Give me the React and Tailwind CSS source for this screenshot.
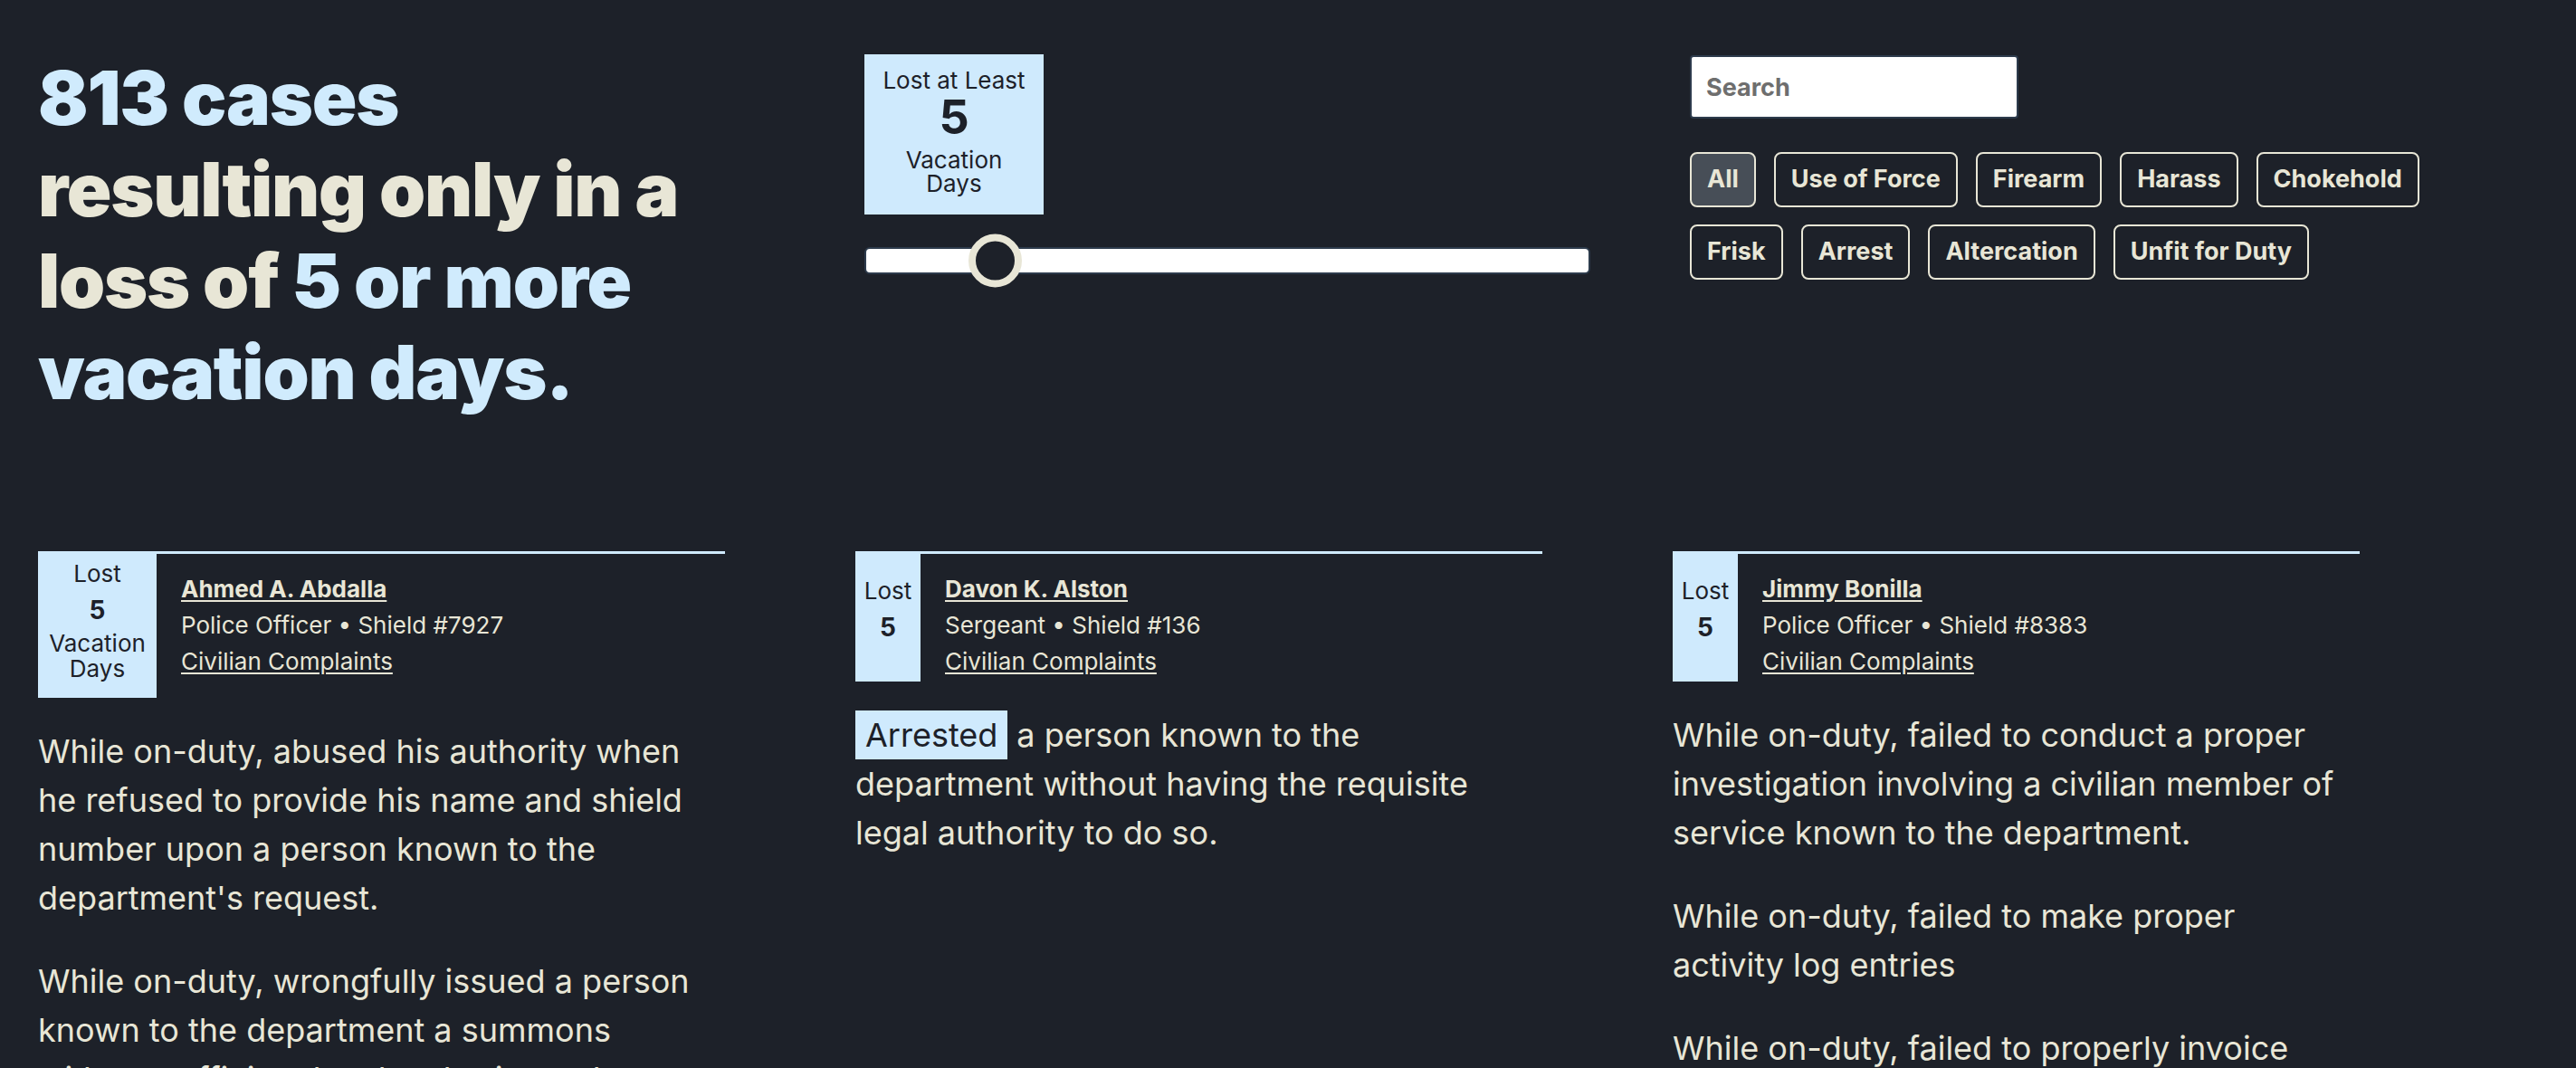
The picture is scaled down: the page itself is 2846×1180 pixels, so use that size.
import { useState } from 'react';

const filters = ['All', 'Use of Force', 'Firearm', 'Harass', 'Chokehold', 'Frisk', 'Arrest', 'Altercation', 'Unfit for Duty'];

const cases = [
    {
        name: 'Ahmed A. Abdalla',
        rank: 'Police Officer',
        shield: '7927',
        days: 5,
        showUnit: true,
        charges: [
            "While on-duty, abused his authority when he refused to provide his name and shield number upon a person known to the department's request.",
            'While on-duty, wrongfully issued a person known to the department a summons without sufficient legal authority to do so.'
        ]
    },
    {
        name: 'Davon K. Alston',
        rank: 'Sergeant',
        shield: '136',
        days: 5,
        showUnit: false,
        highlight: 'Arrested',
        charges: ['a person known to the department without having the requisite legal authority to do so.']
    },
    {
        name: 'Jimmy Bonilla',
        rank: 'Police Officer',
        shield: '8383',
        days: 5,
        showUnit: false,
        charges: [
            'While on-duty, failed to conduct a proper investigation involving a civilian member of service known to the department.',
            'While on-duty, failed to make proper activity log entries',
            'While on-duty, failed to properly invoice property.'
        ]
    }
];

function CaseCard({ c }) {
    return (
        <div>
            <div className="flex items-stretch">
                <div className={`${c.showUnit ? 'w-[131px]' : 'w-[72px]'} shrink-0 bg-[#cfeafd] text-[#1d2129] pt-[8px] pb-[18px] flex flex-col justify-center items-center text-center text-[26px]`}>
                    <div className="leading-[34px]">Lost</div>
                    <div className="leading-[46px] text-[28px] font-bold">{c.days}</div>
                    {c.showUnit && (
                        <div className="leading-[28px]">
                            Vacation
                            <br />
                            Days
                        </div>
                    )}
                </div>
                <div className="flex-1 border-t-[3px] border-[#cfeafd] pt-[19px] pb-[2px] pl-[27px] text-[26px] leading-[40px]">
                    <div>
                        <a href="#" className="font-bold underline underline-offset-[3px]">{c.name}</a>
                    </div>
                    <div>{c.rank} • Shield #{c.shield}</div>
                    <div>
                        <a href="#" className="underline underline-offset-[3px]">Civilian Complaints</a>
                    </div>
                </div>
            </div>

            <div className="mt-[32px] max-w-[740px] flex flex-col gap-[38px] text-[36px] leading-[54px]">
                {c.charges.map((text, i) => (
                    <p key={i}>
                        {i === 0 && c.highlight && (
                            <span className="inline-block bg-[#cfeafd] text-[#1d2129] px-[11px] leading-[54px] mr-[10px]">{c.highlight}</span>
                        )}
                        {text}
                    </p>
                ))}
            </div>
        </div>
    );
}

export default function App() {
    const [active, setActive] = useState('All');

    return (
        <div className="h-[1180px] overflow-hidden bg-[#1d2129] text-[#e8e6d6] font-['Inter',sans-serif] pl-[42px] pt-[58px]">
            <div className="grid grid-cols-[759px_759px_759px] gap-x-[144px]">
                <h1 className="text-[82px] leading-[101px] font-black tracking-[-0.015em]">
                    <span className="block text-[#d0ebfd]">813 cases</span>
                    resulting only in a loss of <span className="text-[#d0ebfd]">5 or more vacation days.</span>
                </h1>

                <div className="pl-[10px] pt-[2px]">
                    <div className="w-[198px] bg-[#cfeafd] text-[#1d2129] text-center text-[26px] pt-[14px] pb-[21px]">
                        <div className="leading-[30px]">Lost at Least</div>
                        <div className="text-[52px] font-bold leading-[52px]">5</div>
                        <div className="mt-[8px] leading-[26px]">
                            Vacation
                            <br />
                            Days
                        </div>
                    </div>
                    <div className="relative mt-[36px] w-[802px] h-[30px] bg-white border-2 border-[#2d3b4c] rounded-[6px]">
                        <div className="absolute left-[113px] top-1/2 -translate-y-1/2 w-[59px] h-[59px] rounded-full border-[8px] border-[#e8e6d6] bg-[#1d2129]" />
                    </div>
                </div>

                <div className="pl-[19px] pt-[3px]">
                    <input
                        type="text"
                        placeholder="Search"
                        className="w-[363px] h-[70px] bg-white border-2 border-[#2d3b4c] rounded-[4px] px-[16px] text-[27px] font-bold text-[#333] placeholder:text-[#6e6e6e] outline-none"
                    />
                    <div className="mt-[37px] w-[880px] flex flex-wrap gap-x-[20px] gap-y-[19px]">
                        {filters.map(f => (
                            <button
                                key={f}
                                onClick={() => setActive(f)}
                                className={`h-[61px] px-[17px] border-2 border-[#e8e6d6] rounded-[8px] text-[27px] font-bold text-[#e8e6d6] ${active === f ? 'bg-[#474e57]' : 'bg-transparent'}`}
                            >
                                {f}
                            </button>
                        ))}
                    </div>
                </div>
            </div>

            <div className="mt-[147px] grid grid-cols-[759px_759px_759px] gap-x-[144px]">
                {cases.map(c => (
                    <CaseCard key={c.name} c={c} />
                ))}
            </div>
        </div>
    );
}
